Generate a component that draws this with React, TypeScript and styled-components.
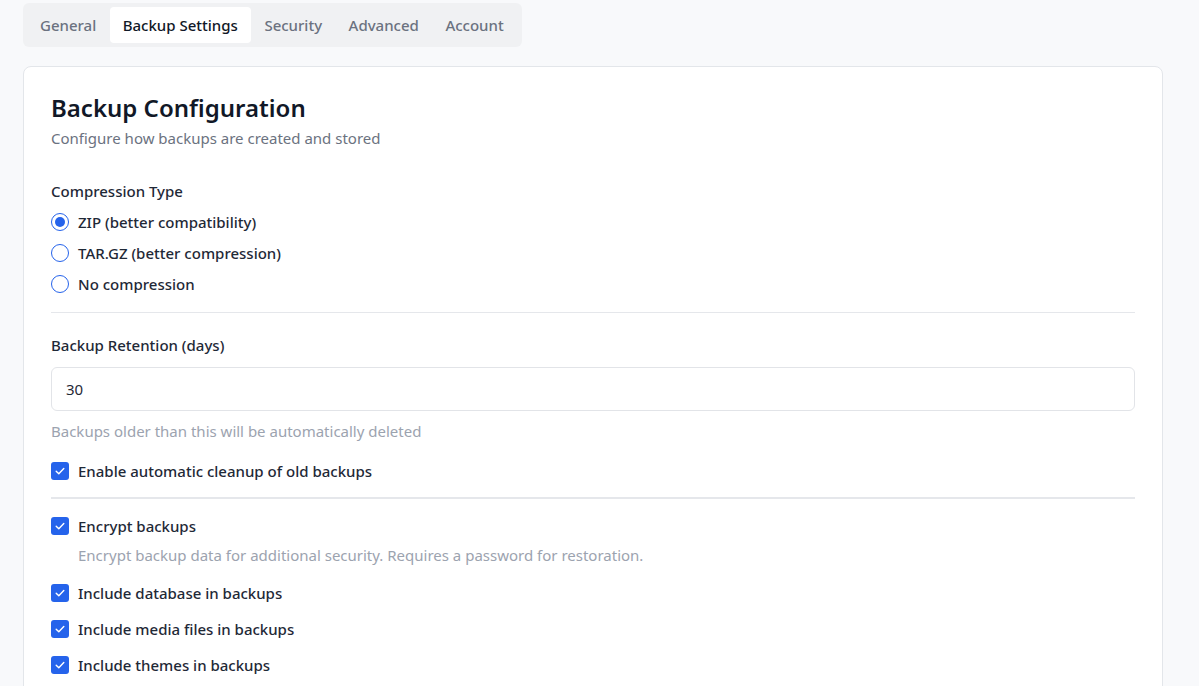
import React, { useState } from "react";
import styled, { createGlobalStyle } from "styled-components";

const GlobalStyle = createGlobalStyle`
  body {
    margin: 0;
    background: #f8f9fb;
    font-family: "Segoe UI", "Noto Sans", "Open Sans", sans-serif;
    color: #111827;
  }
`;

const Page = styled.div`
  padding: 3px 36px 0 23px;
`;

const TabBar = styled.div`
  display: inline-flex;
  gap: 0.5px;
  padding: 4px 5px 4px 4px;
  background: #f0f1f3;
  border-radius: 6px;
  height: 36px;
`;

const Tab = styled.button<{ $active?: boolean }>`
  border: none;
  font-family: inherit;
  font-size: 15px;
  font-weight: 500;
  padding: 0 13px;
  border-radius: 4px;
  cursor: pointer;
  background: ${(p) => (p.$active ? "#ffffff" : "transparent")};
  color: ${(p) => (p.$active ? "#111827" : "#6b7280")};
`;

const Card = styled.div`
  margin-top: 19px;
  background: #ffffff;
  border: 1px solid #e3e6ea;
  border-radius: 8px;
  padding: 21px 27px 40px;
  min-height: 700px;
`;

const Title = styled.h2`
  margin: 0;
  font-size: 24px;
  font-weight: 600;
  line-height: 40px;
  color: #111827;
`;

const Subtitle = styled.p`
  margin: 0;
  font-size: 15px;
  line-height: 20px;
  color: #6b7280;
`;

const Section = styled.div<{ $top: number; $bottom?: number }>`
  padding-top: ${(p) => p.$top}px;
  padding-bottom: ${(p) => p.$bottom ?? 0}px;
`;

const Label = styled.div<{ $space: number }>`
  font-size: 15px;
  font-weight: 500;
  color: #1f2937;
  line-height: 20px;
  margin-bottom: ${(p) => p.$space}px;
`;

const OptionList = styled.div<{ $gap: number; $top?: number }>`
  display: flex;
  flex-direction: column;
  gap: ${(p) => p.$gap}px;
  margin-top: ${(p) => p.$top ?? 0}px;
`;

const Option = styled.label<{ $top?: number }>`
  display: flex;
  align-items: center;
  gap: 9px;
  margin-top: ${(p) => p.$top ?? 0}px;
  font-size: 15px;
  font-weight: 500;
  color: #1f2937;
  line-height: 20px;
  cursor: pointer;
`;

const RadioDot = styled.span<{ $checked?: boolean }>`
  width: 18px;
  height: 18px;
  border-radius: 50%;
  border: 1.5px solid #2563eb;
  box-sizing: border-box;
  display: flex;
  align-items: center;
  justify-content: center;
  flex-shrink: 0;

  &::after {
    content: "";
    width: 10px;
    height: 10px;
    border-radius: 50%;
    background: ${(p) => (p.$checked ? "#2563eb" : "transparent")};
  }
`;

const Box = styled.span`
  width: 18px;
  height: 18px;
  border-radius: 3px;
  background: #2563eb;
  display: flex;
  align-items: center;
  justify-content: center;
  flex-shrink: 0;
`;

const Divider = styled.hr<{ $thick?: boolean }>`
  border: none;
  height: ${(p) => (p.$thick ? 2 : 1)}px;
  background: #e5e7eb;
  margin: 0;
`;

const Input = styled.input`
  display: block;
  width: 100%;
  box-sizing: border-box;
  height: 44px;
  padding: 0 14px;
  font-family: inherit;
  font-size: 15px;
  color: #1f2937;
  border: 1px solid #e2e4e8;
  border-radius: 6px;
  outline: none;
`;

const Help = styled.div<{ $indent?: boolean; $top: number }>`
  font-size: 15px;
  color: #9ca3af;
  line-height: 20px;
  margin-top: ${(p) => p.$top}px;
  padding-left: ${(p) => (p.$indent ? 27 : 0)}px;
`;

const Check = () => (
  <svg width="12" height="12" viewBox="0 0 12 12" fill="none">
    <path d="M2.2 6.2 L4.8 8.8 L9.8 3.4" stroke="#fff" strokeWidth="1.4" strokeLinecap="round" strokeLinejoin="round" />
  </svg>
);

const CheckOption: React.FC<{ label: string; top?: number }> = ({ label, top }) => (
  <Option $top={top}>
    <Box>
      <Check />
    </Box>
    {label}
  </Option>
);

const tabs = ["General", "Backup Settings", "Security", "Advanced", "Account"];

const App: React.FC = () => {
  const [compression, setCompression] = useState("zip");
  const [retention, setRetention] = useState("30");

  const radios = [
    { id: "zip", label: "ZIP (better compatibility)" },
    { id: "tar", label: "TAR.GZ (better compression)" },
    { id: "none", label: "No compression" },
  ];

  return (
    <Page>
      <GlobalStyle />
      <TabBar>
        {tabs.map((t) => (
          <Tab key={t} $active={t === "Backup Settings"}>
            {t}
          </Tab>
        ))}
      </TabBar>

      <Card>
        <Title>Backup Configuration</Title>
        <Subtitle>Configure how backups are created and stored</Subtitle>

        <Section $top={33} $bottom={17}>
          <Label $space={11}>Compression Type</Label>
          <OptionList $gap={11}>
            {radios.map((r) => (
              <Option key={r.id} onClick={() => setCompression(r.id)}>
                <RadioDot $checked={compression === r.id} />
                {r.label}
              </Option>
            ))}
          </OptionList>
        </Section>
        <Divider style={{ marginTop: 1 }} />

        <Section $top={22} $bottom={16}>
          <Label $space={12}>Backup Retention (days)</Label>
          <Input value={retention} onChange={(e) => setRetention(e.target.value)} />
          <Help $top={10}>Backups older than this will be automatically deleted</Help>
          <CheckOption top={20} label="Enable automatic cleanup of old backups" />
        </Section>
        <Divider $thick />

        <Section $top={17}>
          <CheckOption label="Encrypt backups" />
          <Help $indent $top={9}>
            Encrypt backup data for additional security. Requires a password for restoration.
          </Help>
          <OptionList $gap={16} $top={18}>
            <CheckOption label="Include database in backups" />
            <CheckOption label="Include media files in backups" />
            <CheckOption label="Include themes in backups" />
          </OptionList>
        </Section>
      </Card>
    </Page>
  );
};

export default App;
